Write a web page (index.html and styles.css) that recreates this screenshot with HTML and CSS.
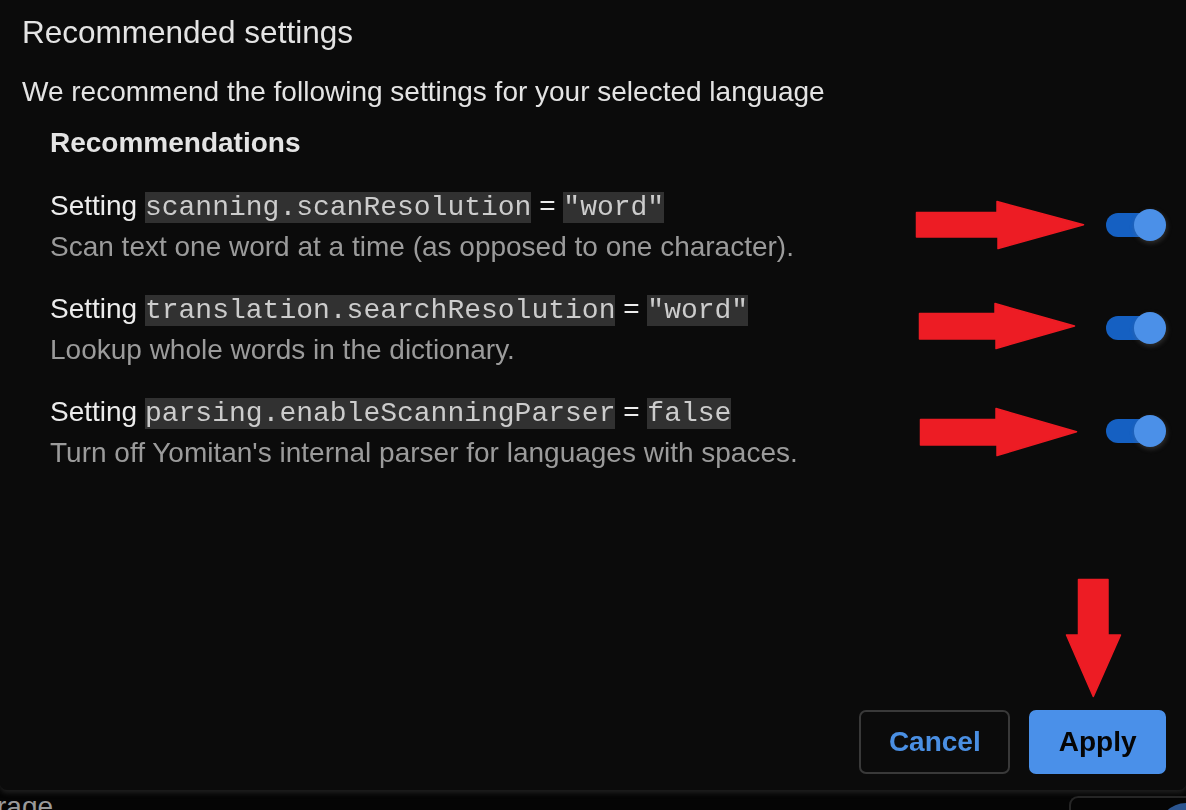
FILE: index.html
```html
<!DOCTYPE html>
<html lang="en">
<head>
<meta charset="utf-8">
<title>Recommended settings</title>
<link rel="stylesheet" href="styles.css">
</head>
<body>
<div class="page">
  <div class="page-row">
    <span class="page-label">rage</span>
    <div class="page-box"></div>
    <div class="page-avatar"></div>
  </div>
</div>

<div class="modal" role="dialog">
  <h1 class="modal-title">Recommended settings</h1>
  <p class="modal-intro">We recommend the following settings for your selected language</p>
  <section class="recs">
    <h2 class="recs-heading">Recommendations</h2>

    <div class="rec">
      <div class="rec-text">
        <div class="rec-line">Setting <code>scanning.scanResolution</code> = <code>"word"</code></div>
        <div class="rec-desc">Scan text one word at a time (as opposed to one character).</div>
      </div>
      <span class="toggle"><span class="track"></span><span class="knob"></span></span>
    </div>

    <div class="rec">
      <div class="rec-text">
        <div class="rec-line">Setting <code>translation.searchResolution</code> = <code>"word"</code></div>
        <div class="rec-desc">Lookup whole words in the dictionary.</div>
      </div>
      <span class="toggle"><span class="track"></span><span class="knob"></span></span>
    </div>

    <div class="rec">
      <div class="rec-text">
        <div class="rec-line">Setting <code>parsing.enableScanningParser</code> = <code>false</code></div>
        <div class="rec-desc">Turn off Yomitan's internal parser for languages with spaces.</div>
      </div>
      <span class="toggle"><span class="track"></span><span class="knob"></span></span>
    </div>
  </section>

  <div class="modal-footer">
    <button class="btn btn-cancel">Cancel</button>
    <button class="btn btn-apply">Apply</button>
  </div>

  <svg class="annot" width="1186" height="790" viewBox="0 0 1186 790" aria-hidden="true">
    <g fill="#ed1c24" stroke="#ed1c24" stroke-width="1.5" stroke-linejoin="round">
      <polygon points="916.5,212.5 997,212.5 997,201.5 1083.5,224.8 998,248.5 998,237 916.5,237"/>
      <polygon points="919.5,313.5 995,313.5 995,303.5 1074.5,326 996,348.5 996,339 919.5,339"/>
      <polygon points="920.5,419.5 996,419.5 996,408.5 1076.5,431.7 997,455.5 997,445 920.5,445"/>
      <polygon points="1078.5,579.5 1108,579.5 1108,635 1120.5,635 1093.3,696.5 1066.5,635 1078.5,635"/>
    </g>
  </svg>
</div>
</body>
</html>
```

FILE: styles.css
```css
html, body {
  margin: 0;
  padding: 0;
}

body {
  background: #050505;
  font-family: "Liberation Sans", Arial, sans-serif;
  color: #e2e2e2;
  width: 1186px;
  height: 810px;
  overflow: hidden;
}

/* underlying page (mostly hidden by the dialog) */
.page {
  padding-top: 790px;
  height: 20px;
  overflow: hidden;
}

.page-row {
  display: flex;
  align-items: flex-start;
  height: 20px;
}

.page-label {
  font-size: 28px;
  line-height: 40px;
  color: #9a9a9a;
  margin-left: -3px;
  margin-top: -3px;
}

.page-box {
  margin-left: auto;
  margin-top: 6px;
  width: 115px;
  height: 40px;
  border: 2px solid #262626;
  border-right: none;
  border-bottom: none;
  border-radius: 9px 0 0 0;
}

.page-avatar {
  position: absolute;
  left: 1158px;
  top: 803px;
  width: 56px;
  height: 56px;
  border-radius: 50%;
  background: #2b5590;
}

/* dialog */
.modal {
  position: fixed;
  left: 0;
  top: 0;
  width: 1186px;
  height: 790px;
  box-sizing: border-box;
  padding: 14px 20px 16px 22px;
  background: #0b0b0b;
  border-radius: 0 0 7px 7px;
  box-shadow: 0 3px 5px #1f1f1f;
  display: flex;
  flex-direction: column;
}

.modal-title {
  margin: 0;
  font-size: 31.5px;
  line-height: 36px;
  font-weight: normal;
  color: #e4e4e4;
}

.modal-intro {
  margin: 22px 0 0;
  font-size: 28px;
  line-height: 40px;
  color: #e4e4e4;
}

.recs {
  margin-top: 11px;
  padding-left: 28px;
  display: flex;
  flex-direction: column;
  gap: 22px;
}

.recs-heading {
  margin: 0 0 1px;
  font-size: 28px;
  line-height: 40px;
  font-weight: bold;
  color: #e4e4e4;
}

.rec {
  display: flex;
  align-items: center;
  justify-content: space-between;
}

.rec-line {
  font-size: 28px;
  line-height: 40px;
  height: 40px;
  color: #ececec;
  white-space: nowrap;
}

.rec-desc {
  padding-top: 1px;
  font-size: 28px;
  line-height: 40px;
  color: #9b9b9b;
  white-space: nowrap;
}

code {
  font-family: "Liberation Mono", "Courier New", monospace;
  font-size: 28px;
  line-height: 1;
  background: #313131;
  color: #cccccc;
  padding: 0;
}

.toggle {
  position: relative;
  width: 60px;
  height: 32px;
  margin-bottom: 4px;
  flex: none;
}

.track {
  position: absolute;
  left: 0;
  top: 4px;
  width: 56px;
  height: 24px;
  border-radius: 12px;
  background: #1560c2;
}

.knob {
  position: absolute;
  right: 0;
  top: 0;
  width: 32px;
  height: 32px;
  border-radius: 50%;
  background: #4b90e8;
  box-shadow: 1px 2px 5px rgba(120, 120, 120, 0.35);
}

.modal-footer {
  margin-top: auto;
  display: flex;
  justify-content: flex-end;
  gap: 19px;
}

.btn {
  font-family: "Liberation Sans", Arial, sans-serif;
  font-size: 28px;
  font-weight: bold;
  height: 64px;
  padding: 0 27.5px;
  border-radius: 7px;
  border: 2px solid #393939;
  cursor: pointer;
}

.btn-cancel {
  background: transparent;
  color: #4a8fe3;
}

.btn-apply {
  background: #4a90e9;
  border-color: #4a90e9;
  color: #050505;
}

.annot {
  position: absolute;
  left: 0;
  top: 0;
  pointer-events: none;
}
```
